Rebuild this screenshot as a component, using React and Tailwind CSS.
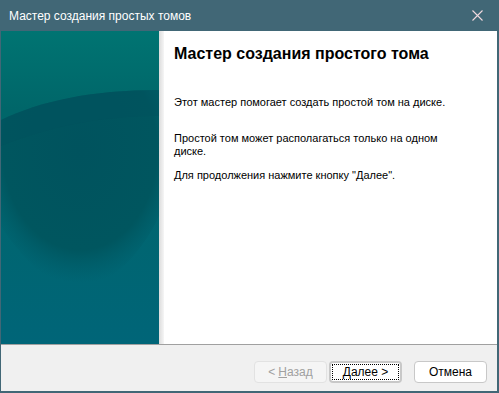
import React from 'react'

const Panel = () => (
    <svg width="158" height="313" viewBox="0 0 158 313" className="block">
        <defs>
            <linearGradient id="bg" x1="0" y1="0" x2="0" y2="1">
                <stop offset="0" stopColor="#007472" />
                <stop offset="0.25" stopColor="#006669" />
                <stop offset="1" stopColor="#006578" />
            </linearGradient>
            <radialGradient id="blob" cx="0.5" cy="0.3" r="0.65">
                <stop offset="0" stopColor="#00535e" />
                <stop offset="0.75" stopColor="#00565f" />
                <stop offset="1" stopColor="#005b68" stopOpacity="0" />
            </radialGradient>
        </defs>
        <rect width="158" height="313" fill="url(#bg)" />
        <path d="M0 89 C 40 70, 90 59, 158 59 L158 185 C 140 225, 105 258, 68 262 C 38 245, 12 215, 0 195 Z" fill="url(#blob)" />
        <path d="M0 89 C 40 70, 90 59, 158 59 L158 85 C 100 85, 50 95, 0 115 Z" fill="#00525d" opacity="0.5" />
    </svg>
)

const Btn = ({ children, disabled, focused }) => (
    <div className={`w-[73px] h-[22px] rounded-[4px] border flex items-center justify-center text-[12px] ${disabled ? 'border-[#e2e2e2] bg-[#f5f5f5] text-[#a0a0a0]' : 'border-[#c8c8c8] bg-white text-black'} ${focused ? 'border-[#0067c0] border-2' : ''}`}>
        {focused ? (
            <div className="w-[67px] h-[16px] border border-dotted border-black flex items-center justify-center">{children}</div>
        ) : children}
    </div>
)

export default function App() {
    return (
        <div className="w-[499px] h-[393px] bg-[#416776] flex flex-col overflow-hidden" style={{ fontFamily: '"Liberation Sans", Arial, sans-serif' }}>
            <div className="h-[31px] flex items-center justify-between pl-[9px] pr-[16px] text-white text-[12px]">
                <span>Мастер создания простых томов</span>
                <svg width="11" height="11" viewBox="0 0 11 11"><path d="M0.5 0.5 L10.5 10.5 M10.5 0.5 L0.5 10.5" stroke="#f2d9df" strokeWidth="1.1" /></svg>
            </div>
            <div className="flex-1 ml-[1px] mr-[2px] mb-[2px] flex flex-col bg-[#f0f0f0]">
                <div className="flex h-[314px] border-b border-[#a0a0a0]">
                    <Panel />
                    <div className="w-[5px] bg-gradient-to-r from-[#dcdcdc] to-[#f6f6f6]" />
                    <div className="flex-1 bg-white pl-[10px] pt-[13px] text-[11px] text-black leading-[13px]">
                        <h1 className="text-[16px] font-bold leading-[20px]">Мастер создания простого тома</h1>
                        <p className="mt-[32px]">Этот мастер помогает создать простой том на диске.</p>
                        <p className="mt-[23px] w-[280px]">Простой том может располагаться только на одном диске.</p>
                        <p className="mt-[11px]">Для продолжения нажмите кнопку "Далее".</p>
                    </div>
                </div>
                <div className="flex-1 flex items-center justify-end pr-[10px] pt-[7px]">
                    <Btn disabled>&lt; <span className="underline ml-[3px]">Н</span>азад</Btn>
                    <div className="ml-[2px]"><Btn focused><span className="underline">Д</span>алее &gt;</Btn></div>
                    <div className="ml-[12px]"><Btn>Отмена</Btn></div>
                </div>
            </div>
        </div>
    )
}
